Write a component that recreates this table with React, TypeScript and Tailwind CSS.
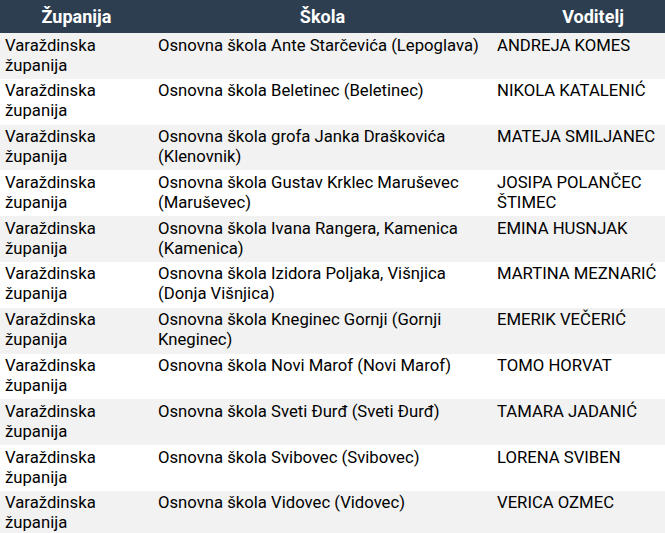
import React from "react";

const rows: [string[], string[]][] = [
  [["Osnovna škola Ante Starčevića (Lepoglava)"], ["ANDREJA KOMES"]],
  [["Osnovna škola Beletinec (Beletinec)"], ["NIKOLA KATALENIĆ"]],
  [["Osnovna škola grofa Janka Draškovića", "(Klenovnik)"], ["MATEJA SMILJANEC"]],
  [["Osnovna škola Gustav Krklec Maruševec", "(Maruševec)"], ["JOSIPA POLANČEC", "ŠTIMEC"]],
  [["Osnovna škola Ivana Rangera, Kamenica", "(Kamenica)"], ["EMINA HUSNJAK"]],
  [["Osnovna škola Izidora Poljaka, Višnjica", "(Donja Višnjica)"], ["MARTINA MEZNARIĆ"]],
  [["Osnovna škola Kneginec Gornji (Gornji", "Kneginec)"], ["EMERIK VEČERIĆ"]],
  [["Osnovna škola Novi Marof (Novi Marof)"], ["TOMO HORVAT"]],
  [["Osnovna škola Sveti Đurđ (Sveti Đurđ)"], ["TAMARA JADANIĆ"]],
  [["Osnovna škola Svibovec (Svibovec)"], ["LORENA SVIBEN"]],
  [["Osnovna škola Vidovec (Vidovec)"], ["VERICA OZMEC"]],
];

function Lines({ lines }: { lines: string[] }) {
  return (
    <>
      {lines.map((l, i) => (
        <div key={i} className="whitespace-nowrap">
          {l}
        </div>
      ))}
    </>
  );
}

export default function App() {
  return (
    <div
      className="w-[665px] h-[533px] overflow-hidden bg-white"
      style={{ fontFamily: "Roboto, 'Noto Sans', sans-serif" }}
    >
      <div className="w-[700px]">
        <div className="grid grid-cols-[153px_339px_202px] bg-[#2c3e50] text-white font-bold text-[18px] h-[33px] items-center">
          <div className="text-center">Županija</div>
          <div className="text-center">Škola</div>
          <div className="text-center">Voditelj</div>
        </div>
        {rows.map(([school, leader], i) => (
          <div
            key={i}
            className={`grid grid-cols-[153px_339px_202px] h-[45.8px] pt-[2.5px] text-[16.7px] leading-[20px] text-black ${
              i % 2 === 0 ? "bg-[#f2f2f2]" : "bg-white"
            }`}
          >
            <div className="pl-[5px]">
              <Lines lines={["Varaždinska", "županija"]} />
            </div>
            <div className="pl-[5px]">
              <Lines lines={school} />
            </div>
            <div className="pl-[5px]">
              <Lines lines={leader} />
            </div>
          </div>
        ))}
      </div>
    </div>
  );
}
